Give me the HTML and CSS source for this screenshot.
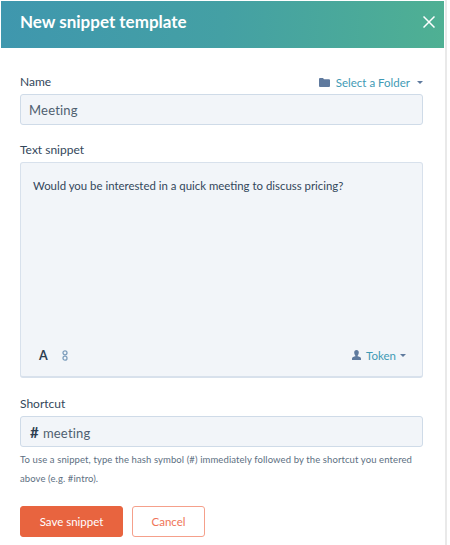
FILE: index.html
```html
<!DOCTYPE html>
<html lang="en">
<head>
<meta charset="utf-8">
<title>New snippet template</title>
<link rel="stylesheet" href="styles.css">
</head>
<body>
<div class="panel">
  <header class="head">
    <h1 class="title">New snippet template</h1>
    <svg class="close" width="12" height="12" viewBox="0 0 12 12"><path d="M.5.5l11 11M11.500.5l-11 11" stroke="#fff" stroke-width="1.500" fill="none"/></svg>
  </header>
  <main class="form">
    <div class="label-row name-row">
      <span class="label">Name</span>
      <span class="link">
        <svg class="folder" width="11" height="9" viewBox="0 0 11 9"><path d="M0 1a1 1 0 0 1 1-1h3l1 1.300h5a1 1 0 0 1 1 1V8a1 1 0 0 1-1 1H1a1 1 0 0 1-1-1z" fill="#5f7a9e"/></svg>
        Select a Folder
        <span class="caret folder-caret"></span>
      </span>
    </div>
    <div class="field">Meeting</div>
    <div class="label snippet-label">Text snippet</div>
    <div class="area">
      <p class="area-text">Would you be interested in a quick meeting to discuss pricing?</p>
      <div class="tools">
        <span class="tool-a">A</span>
        <svg class="chain" width="6" height="11" viewBox="0 0 6 11"><g fill="none" stroke="#7f9fbd" stroke-width="1.300"><circle cx="3" cy="2.800" r="2"/><circle cx="3" cy="8.200" r="2"/></g></svg>
        <span class="link token">
          <svg width="9" height="10" viewBox="0 0 9 10"><path d="M4.500 0C6 0 6.800 1 6.800 2.600S6 5.400 5.600 5.700v.6C7 6.700 9 7.200 9 8.400V10H0V8.400c0-1.200 2-1.700 3.400-2.100v-.6C3 5.400 2.200 4.200 2.200 2.600S3 0 4.500 0z" fill="#5f7a9e"/></svg>
          Token
          <span class="caret"></span>
        </span>
      </div>
    </div>
    <div class="label shortcut-label">Shortcut</div>
    <div class="field short"><span class="hash">#</span>meeting</div>
    <p class="help">To use a snippet, type the hash symbol (#) immediately followed by the shortcut you entered above (e.g. #intro).</p>
    <div class="actions">
      <button class="btn save" type="button">Save snippet</button>
      <button class="btn cancel" type="button">Cancel</button>
    </div>
  </main>
</div>
</body>
</html>
```
FILE: styles.css
```css
* { box-sizing: border-box; }
html, body { margin: 0; padding: 0; background: #fff; }
body { font-family: Lato, "Open Sans", sans-serif; color: #33475b; width: 450px; height: 545px; overflow: hidden; }
.panel { width: 447px; height: 545px; border-right: 2px solid #e9e9e9; padding: 1px 0 0 1px; }
.head { height: 47px; width: 443px; display: flex; align-items: center; justify-content: space-between; padding: 0 9px 6px 19px; background: linear-gradient(93deg, #3f97ae 0%, #44a0a4 50%, #4fb093 100%); }
.title { margin: 0; font-size: 17px; font-weight: 700; color: #fff; }
.close { display: block; }
.form { padding: 0 0 0 19px; width: 422px; }
.label { font-size: 12px; line-height: 16px; color: #33475b; }
.label-row { display: flex; justify-content: space-between; align-items: center; }
.name-row { margin-top: 26px; height: 16px; }
.link { font-size: 11.500px; color: #3f9ab5; display: inline-flex; align-items: center; gap: 5px; }
.folder { margin-right: 1px; }
.caret { width: 0; height: 0; border: 3px solid transparent; border-top: 3.500px solid #5f7a9e; border-bottom: 0; margin-left: -1px; }
.folder-caret { margin-left: 2px; }
.field { height: 31px; margin-top: 4px; background: #f2f5f9; border: 1px solid #cfdbe8; border-radius: 3px; padding: 0 8px; font-size: 13px; line-height: 30px; color: #4f5f70; letter-spacing: .2px; }
.snippet-label { margin-top: 17px; }
.area { height: 216px; margin-top: 4px; background: #f2f5f9; border: 1px solid #d8e1ec; border-bottom-width: 2px; border-radius: 3px; padding: 0 16px 0 12px; display: flex; flex-direction: column; justify-content: space-between; }
.area-text { margin: 15px 0 0; font-size: 11.400px; line-height: 16px; color: #33475b; }
.tools { display: flex; align-items: center; gap: 14px; height: 16px; margin-bottom: 13px; padding-left: 6px; }
.tool-a { font-size: 12.500px; font-weight: 700; color: #2d3e50; }
.token { margin-left: auto; }
.shortcut-label { margin-top: 18px; }
.short { padding-left: 9px; }
.hash { font-weight: 700; font-size: 15px; color: #2d3e50; margin-right: 4px; }
.help { margin: 3px 0 0; font-size: 9.500px; line-height: 19px; color: #5d6f82; letter-spacing: .1px; }
.actions { display: flex; gap: 9px; margin-top: 18px; }
.btn { height: 31px; border-radius: 3px; font-family: inherit; font-size: 11.500px; padding: 0; }
.save { width: 103px; background: #e8643f; border: 1px solid #e8643f; color: #fff; }
.cancel { width: 73px; background: #fff; border: 1px solid #f5a08b; color: #ef7457; }
```
